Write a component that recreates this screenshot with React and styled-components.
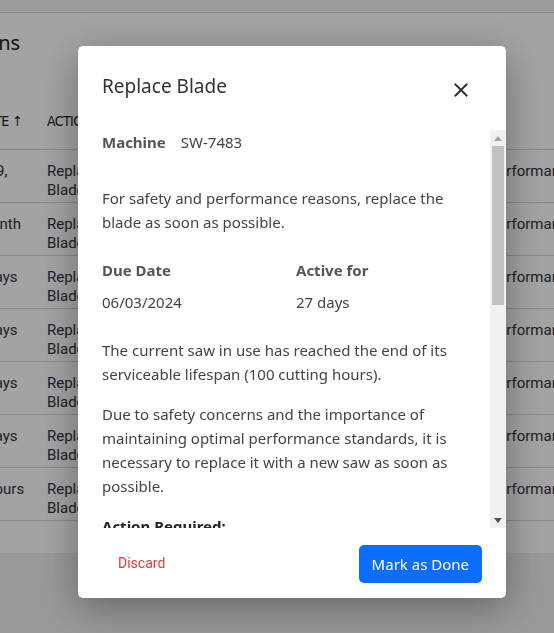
import React from "react";
import styled, { createGlobalStyle } from "styled-components";

const Global = createGlobalStyle`
  html, body { margin: 0; padding: 0; }
  body {
    background: #f0f0f0;
    font-family: "Noto Sans", "Open Sans", sans-serif;
    overflow: hidden;
  }
  * { box-sizing: border-box; }
`;

const Page = styled.div`
  width: 554px;
  height: 633px;
  overflow: hidden;
  background: #f0f0f0;
`;

const TopBar = styled.div`
  height: 13px;
  background: #f3f3f3;
  border-bottom: 1px solid #d8d8d8;
`;

const PageTitle = styled.h1`
  margin: 0;
  padding: 15px 0 0 0;
  height: 93px;
  margin-left: -176px;
  font-family: "Noto Sans", sans-serif;
  font-weight: 400;
  font-size: 20px;
  line-height: 30px;
  color: #222;
  background: #fff;
  white-space: nowrap;
`;

const Card = styled.div`
  background: #fff;
  margin-left: -50px;
  width: 720px;
  padding-bottom: 32px;
`;

const Row = styled.div`
  display: grid;
  grid-template-columns: 97px 80px 362px 200px;
  height: ${(p) => (p.$head ? "44px" : "53px")};
  border-bottom: 1px solid #d6d6d6;
  align-items: start;
  padding-top: ${(p) => (p.$head ? "7px" : "0")};
`;

const HeadCell = styled.div`
  font-family: "DejaVu Sans Condensed", "Liberation Sans Narrow", sans-serif;
  font-size: 14px;
  letter-spacing: -0.6px;
  color: #222;
  text-transform: uppercase;
  white-space: nowrap;
  overflow: hidden;
`;

const Cell = styled.div`
  font-family: "Roboto", sans-serif;
  font-size: 15px;
  line-height: 19px;
  color: #2b3340;
  padding-top: 12px;
  padding-right: 10px;
  white-space: ${(p) => (p.$nowrap ? "nowrap" : "normal")};
  overflow: hidden;
`;

const Overlay = styled.div`
  position: fixed;
  inset: 0;
  background: rgba(0, 0, 0, 0.36);
  padding: 46px 0 0 78px;
`;

const Modal = styled.div`
  width: 428px;
  height: 552px;
  background: #fff;
  border-radius: 5px;
  box-shadow: 0 10px 40px rgba(0, 0, 0, 0.35);
  display: flex;
  flex-direction: column;
  overflow: hidden;
`;

const Header = styled.div`
  height: 84px;
  flex: none;
  display: flex;
  align-items: flex-start;
  justify-content: space-between;
  padding: 26px 36px 0 24px;
`;

const Title = styled.h2`
  margin: 0;
  font-weight: 400;
  font-size: 19px;
  line-height: 28px;
  color: #333;
`;

const CloseButton = styled.button`
  border: 0;
  background: none;
  padding: 0;
  margin-top: 9px;
  width: 18px;
  height: 18px;
  display: flex;
  align-items: center;
  justify-content: center;
  cursor: pointer;
`;

const ScrollArea = styled.div`
  flex: 1;
  min-height: 0;
  display: flex;
`;

const Body = styled.div`
  flex: 1;
  min-width: 0;
  overflow: hidden;
  padding: 0 24px 24px 24px;
  color: #444;
  font-size: 15px;
  line-height: 24px;
`;

const Scrollbar = styled.div`
  width: 16px;
  flex: none;
  background: #f1f1f1;
  display: flex;
  flex-direction: column;
`;

const ScrollButton = styled.div`
  height: 16px;
  flex: none;
  display: flex;
  align-items: center;
  justify-content: center;
`;

const Track = styled.div`
  flex: 1;
  padding: 0 2px;
`;

const Thumb = styled.div`
  height: 159px;
  background: #c1c1c1;
`;

const MetaLine = styled.div`
  display: flex;
  gap: 15px;
  margin-bottom: 32px;
`;

const Label = styled.span`
  font-weight: 700;
  color: #555;
`;

const Para = styled.p`
  margin: 0 0 16px 0;
`;

const Grid = styled.div`
  display: grid;
  grid-template-columns: 1fr 1fr;
  column-gap: 24px;
  row-gap: 8px;
  margin: 24px 0 24px 0;
`;

const Heading = styled.h3`
  margin: 0 0 8px 0;
  font-size: 15px;
  font-weight: 700;
  color: #222;
  line-height: 24px;
`;

const List = styled.ol`
  margin: 0 0 16px 0;
  padding-left: 22px;
  li { margin-bottom: 6px; }
`;

const Footer = styled.div`
  height: 70px;
  flex: none;
  display: flex;
  align-items: center;
  justify-content: space-between;
  padding: 2px 24px 0 24px;
`;

const TextButton = styled.button`
  border: 0;
  background: none;
  font-family: "Roboto", sans-serif;
  font-size: 14px;
  color: #e53935;
  padding: 8px 16px;
  margin-top: -2px;
  cursor: pointer;
`;

const PrimaryButton = styled.button`
  border: 0;
  background: #0d6efd;
  color: #fff;
  font-family: "Noto Sans", sans-serif;
  font-size: 15px;
  height: 38px;
  padding: 0 13px;
  border-radius: 5px;
  cursor: pointer;
`;

const rows = [
  ["March 9, 2024", "Replace Blade", "Performance"],
  ["in 1 month", "Replace Blade", "Performance"],
  ["in 20 days", "Replace Blade", "Performance"],
  ["in 22 days", "Replace Blade", "Performance"],
  ["in 25 days", "Replace Blade", "Performance"],
  ["in 28 days", "Replace Blade", "Performance"],
  ["in 10 hours", "Replace Blade", "Performance"],
];

export default function App() {
  return (
    <Page>
      <Global />
      <TopBar />
      <PageTitle>Maintenance Actions</PageTitle>
      <Card>
        <Row $head>
          <HeadCell>Due Date ↑</HeadCell>
          <HeadCell>Action</HeadCell>
          <HeadCell>Description</HeadCell>
          <HeadCell />
        </Row>
        {rows.map((r, i) => (
          <Row key={i}>
            <Cell>{r[0]}</Cell>
            <Cell>{r[1]}</Cell>
            <Cell $nowrap>Replace the saw blade</Cell>
            <Cell $nowrap>{r[2]}</Cell>
          </Row>
        ))}
      </Card>
      <Overlay>
        <Modal role="dialog">
          <Header>
            <Title>Replace Blade</Title>
            <CloseButton aria-label="Close">
              <svg width="16" height="16" viewBox="0 0 16 16">
                <path d="M2.5 2.5 L13.5 13.5 M13.5 2.5 L2.5 13.5" stroke="#333" strokeWidth="2" strokeLinecap="square" />
              </svg>
            </CloseButton>
          </Header>
          <ScrollArea>
            <Body>
              <MetaLine>
                <Label>Machine</Label>
                <span>SW-7483</span>
              </MetaLine>
              <Para>For safety and performance reasons, replace the blade as soon as possible.</Para>
              <Grid>
                <Label>Due Date</Label>
                <Label>Active for</Label>
                <span>06/03/2024</span>
                <span>27 days</span>
              </Grid>
              <Para>The current saw in use has reached the end of its serviceable lifespan (100 cutting hours).</Para>
              <Para>
                Due to safety concerns and the importance of maintaining optimal performance standards, it is
                necessary to replace it with a new saw as soon as possible.
              </Para>
              <Heading>Action Required:</Heading>
              <List>
                <li>Stop the machine and disconnect it from the power supply.</li>
                <li>Remove the worn saw blade following the safety guidelines.</li>
                <li>Install a new saw blade of the same specification.</li>
              </List>
            </Body>
            <Scrollbar aria-hidden="true">
              <ScrollButton>
                <svg width="8" height="5" viewBox="0 0 8 5">
                  <polygon points="0,5 8,5 4,0" fill="#a3a3a3" />
                </svg>
              </ScrollButton>
              <Track>
                <Thumb />
              </Track>
              <ScrollButton>
                <svg width="8" height="5" viewBox="0 0 8 5">
                  <polygon points="0,0 8,0 4,5" fill="#505050" />
                </svg>
              </ScrollButton>
            </Scrollbar>
          </ScrollArea>
          <Footer>
            <TextButton>Discard</TextButton>
            <PrimaryButton>Mark as Done</PrimaryButton>
          </Footer>
        </Modal>
      </Overlay>
    </Page>
  );
}
